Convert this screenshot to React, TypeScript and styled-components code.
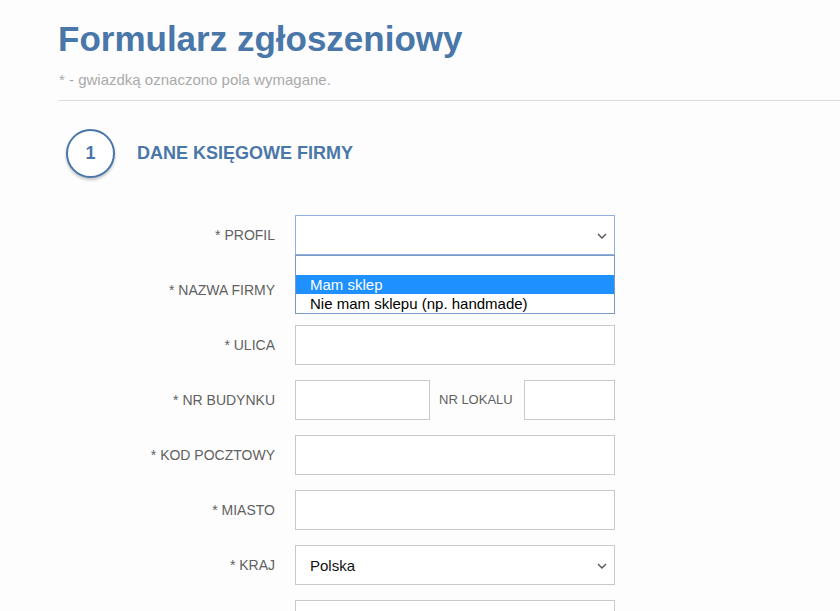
import React from "react";
import styled, { createGlobalStyle } from "styled-components";

const Global = createGlobalStyle`
  html, body { margin: 0; padding: 0; overflow: hidden; background: #fdfdfd; }
  body { font-family: "Liberation Sans", Arial, sans-serif; }
  * { box-sizing: border-box; }
`;

const Page = styled.div`
  padding-left: 58px;
`;

const Title = styled.h1`
  margin: 19px 0 0 0;
  font-size: 35px;
  line-height: 40px;
  font-weight: 700;
  color: #4a77a9;
`;

const Subtitle = styled.p`
  margin: 13px 0 0 1px;
  font-size: 15px;
  line-height: 16px;
  color: #aaaaaa;
`;

const Rule = styled.hr`
  margin: 12px 0 0 0;
  border: none;
  border-top: 1px solid #dddddd;
  height: 0;
`;

const SectionHead = styled.div`
  display: flex;
  align-items: center;
  gap: 22px;
  margin: 28px 0 0 8px;
`;

const StepCircle = styled.div`
  width: 49px;
  height: 49px;
  border-radius: 50%;
  border: 2px solid #4a77a9;
  box-shadow: 0 2px 3px rgba(0, 0, 0, 0.22);
  display: flex;
  align-items: center;
  justify-content: center;
  font-size: 18px;
  font-weight: 700;
  color: #4a77a9;
  background: #fff;
`;

const SectionTitle = styled.h2`
  margin: 0 0 1px 0;
  font-size: 18px;
  font-weight: 700;
  color: #4a77a9;
`;

const Form = styled.div`
  margin-top: 37px;
  display: grid;
  grid-template-columns: 217px 320px;
  column-gap: 20px;
  row-gap: 15px;
  grid-auto-rows: 40px;
`;

const Label = styled.label`
  display: flex;
  align-items: center;
  justify-content: flex-end;
  font-size: 14px;
  color: #616161;
  text-transform: uppercase;
`;

const Field = styled.div`
  position: relative;
  display: flex;
  align-items: center;
`;

const Input = styled.div<{ $w?: number }>`
  height: 40px;
  ${(p) => (p.$w ? `width: ${p.$w}px; flex: none;` : `flex: 1;`)}
  border: 1px solid #c9c9c9;
  background: #fff;
`;

const InlineLabel = styled.span`
  font-size: 13px;
  color: #616161;
  margin: 0 11px 0 9px;
  padding-bottom: 2px;
`;

const SelectBox = styled.div<{ $focused?: boolean }>`
  flex: 1;
  height: 40px;
  display: flex;
  align-items: center;
  justify-content: space-between;
  padding: 0 7px 0 14px;
  border: 1px solid ${(p) => (p.$focused ? "#8fb1e3" : "#c9c9c9")};
  background: #fff;
  font-size: 15px;
  color: #111;
`;

const Dropdown = styled.ul`
  position: absolute;
  top: 40px;
  left: 0;
  width: 320px;
  margin: 0;
  padding: 0;
  list-style: none;
  background: #fff;
  border: 1px solid #7c98c6;
  z-index: 5;
`;

const Option = styled.li<{ $active?: boolean }>`
  height: 19px;
  line-height: 19px;
  padding-left: 14px;
  font-size: 15px;
  color: ${(p) => (p.$active ? "#fff" : "#000")};
  background: ${(p) => (p.$active ? "#1e90ff" : "transparent")};
`;

const Chevron = () => (
  <svg width="10" height="6" viewBox="0 0 10 6" style={{ marginTop: 1 }}>
    <path d="M1 1 L5 5 L9 1" fill="none" stroke="#555" strokeWidth="1.4" />
  </svg>
);

export default function App() {
  return (
    <Page>
      <Global />
      <Title>Formularz zgłoszeniowy</Title>
      <Subtitle>* - gwiazdką oznaczono pola wymagane.</Subtitle>
      <Rule />
      <SectionHead>
        <StepCircle>1</StepCircle>
        <SectionTitle>DANE KSIĘGOWE FIRMY</SectionTitle>
      </SectionHead>
      <Form>
        <Label>* Profil</Label>
        <Field>
          <SelectBox $focused>
            <span />
            <Chevron />
          </SelectBox>
          <Dropdown>
            <Option>&nbsp;</Option>
            <Option $active>Mam sklep</Option>
            <Option>Nie mam sklepu (np. handmade)</Option>
          </Dropdown>
        </Field>

        <Label>* Nazwa firmy</Label>
        <Field>
          <Input />
        </Field>

        <Label>* Ulica</Label>
        <Field>
          <Input />
        </Field>

        <Label>* Nr budynku</Label>
        <Field>
          <Input $w={135} />
          <InlineLabel>NR LOKALU</InlineLabel>
          <Input />
        </Field>

        <Label>* Kod pocztowy</Label>
        <Field>
          <Input />
        </Field>

        <Label>* Miasto</Label>
        <Field>
          <Input />
        </Field>

        <Label>* Kraj</Label>
        <Field>
          <SelectBox>
            <span>Polska</span>
            <Chevron />
          </SelectBox>
        </Field>

        <Label />
        <Field>
          <Input />
        </Field>
      </Form>
    </Page>
  );
}
